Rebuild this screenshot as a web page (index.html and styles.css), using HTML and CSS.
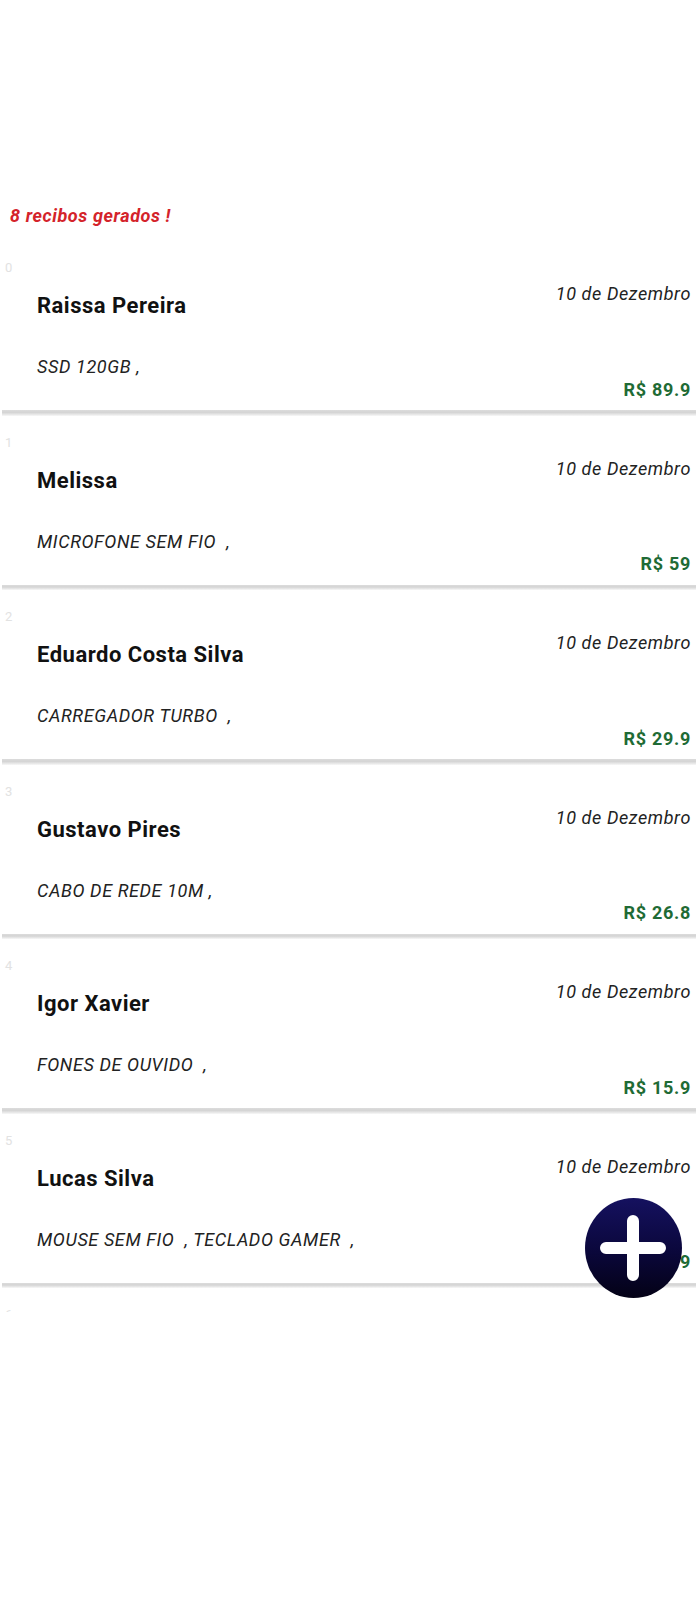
FILE: index.html
```html
<!DOCTYPE html>
<html lang="pt-BR">
<head>
<meta charset="utf-8">
<title>Recibos</title>
<link rel="stylesheet" href="styles.css">
</head>
<body>
<main class="page">
  <h1 class="count">8 recibos gerados !</h1>
  <div class="list">
    <div class="card">
      <div class="idx">0</div>
      <div class="body">
        <div class="left"><div class="name">Raissa Pereira</div><div class="items">SSD 120GB ,</div></div>
        <div class="right"><div class="date">10 de Dezembro</div><div class="price">R$ 89.9</div></div>
      </div>
      <div class="sep"></div>
    </div>
    <div class="card">
      <div class="idx">1</div>
      <div class="body">
        <div class="left"><div class="name">Melissa</div><div class="items">MICROFONE SEM FIO&nbsp; ,</div></div>
        <div class="right"><div class="date">10 de Dezembro</div><div class="price">R$ 59</div></div>
      </div>
      <div class="sep"></div>
    </div>
    <div class="card">
      <div class="idx">2</div>
      <div class="body">
        <div class="left"><div class="name">Eduardo Costa Silva</div><div class="items">CARREGADOR TURBO&nbsp; ,</div></div>
        <div class="right"><div class="date">10 de Dezembro</div><div class="price">R$ 29.9</div></div>
      </div>
      <div class="sep"></div>
    </div>
    <div class="card">
      <div class="idx">3</div>
      <div class="body">
        <div class="left"><div class="name">Gustavo Pires</div><div class="items">CABO DE REDE 10M ,</div></div>
        <div class="right"><div class="date">10 de Dezembro</div><div class="price">R$ 26.8</div></div>
      </div>
      <div class="sep"></div>
    </div>
    <div class="card">
      <div class="idx">4</div>
      <div class="body">
        <div class="left"><div class="name">Igor Xavier</div><div class="items">FONES DE OUVIDO&nbsp; ,</div></div>
        <div class="right"><div class="date">10 de Dezembro</div><div class="price">R$ 15.9</div></div>
      </div>
      <div class="sep"></div>
    </div>
    <div class="card">
      <div class="idx">5</div>
      <div class="body">
        <div class="left"><div class="name">Lucas Silva</div><div class="items">MOUSE SEM FIO&nbsp; , TECLADO GAMER&nbsp; ,</div></div>
        <div class="right"><div class="date">10 de Dezembro</div><div class="price">R$ 79.9</div></div>
      </div>
      <div class="sep"></div>
    </div>
    <div class="card">
      <div class="idx">6</div>
    </div>
  </div>
  <button class="fab" aria-label="Adicionar">
    <svg viewBox="0 0 97 100" width="97" height="100"><path d="M48 23 V77 M21 50 H75" stroke="#fff" stroke-width="12" stroke-linecap="round" fill="none"/></svg>
  </button>
</main>
</body>
</html>
```
FILE: styles.css
```css
* { box-sizing: border-box; }
html, body { margin: 0; padding: 0; background: #fff; }
body { font-family: Roboto, "Liberation Sans", sans-serif; color: #1a1a1a; }
.page { position: relative; min-height: 1600px; padding-top: 206px; }
.count {
  margin: 0 0 15px 10px;
  font-size: 18px; line-height: 20px; font-weight: 700; font-style: italic;
  letter-spacing: 0.6px; color: #d4232a;
}
.list { height: 1071px; overflow: hidden; }
.card { height: 174.5px; display: flex; flex-direction: column; }
.idx {
  margin: 19px 0 0 5px; font-size: 13px; line-height: 16px; color: #e2e2e2;
}
.body { flex: 1; display: flex; justify-content: space-between; padding: 0 7px 0 37px; }
.left, .right { display: flex; flex-direction: column; }
.right { align-items: flex-end; }
.name { margin-top: 17px; font-size: 22px; line-height: 25px; font-weight: 700; letter-spacing: 0.5px; color: #111; }
.items { margin-top: 38.4px; font-size: 18px; line-height: 22px; font-style: italic; letter-spacing: 0.6px; color: #222; white-space: pre; }
.date { margin-top: 8.2px; font-size: 18px; line-height: 19px; font-style: italic; letter-spacing: 0.6px; color: #222; }
.price { margin-top: 76.5px; font-size: 18px; line-height: 20px; font-weight: 700; letter-spacing: 0.7px; color: #1f6b35; }
.sep {
  height: 5.5px; margin: 0 2px;
  background: linear-gradient(#dcdcdc, #d4d4d4 40%, #e8e8e8 75%, #f8f8f8);
}
.fab {
  position: absolute; left: 585px; top: 1198px; width: 97px; height: 100px;
  border: 0; padding: 0; border-radius: 50%;
  background: linear-gradient(#15115f, #0a073a 55%, #040216);
  display: flex; align-items: center; justify-content: center;
}
.fab svg { display: block; }
```
